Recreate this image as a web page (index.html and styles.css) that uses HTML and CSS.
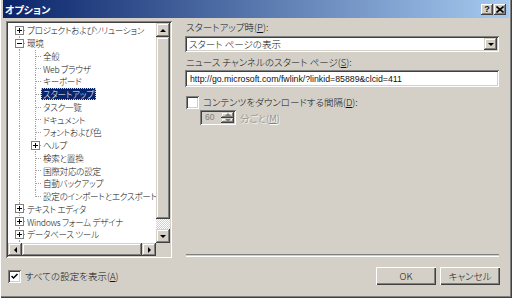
FILE: index.html
```html
<!DOCTYPE html>
<html lang="ja">
<head>
    <meta charset="UTF-8">
    <meta name="viewport" content="width=device-width, initial-scale=1.0">
    <title>オプション</title>
    <link rel="stylesheet" href="styles.css">
</head>
<body>

    <div class="window">
        <div class="titlebar">
            <span class="title">オプション</span>
            <div class="caption-btns">
                <span class="cbtn">?</span>
                <span class="cbtn">
                    <svg width="8" height="7" viewBox="0 0 8 7"><path d="M0.5 0.5L7.5 6.5M7.5 0.5L0.5 6.5" stroke="#000" stroke-width="1.6"/></svg>
                </span>
            </div>
        </div>

        <div class="main">
            <div class="tree">
                <div class="tree-list">
                    <div class="row"><span class="cell first"><span class="exp plus"></span></span><span class="label">プロジェクトおよびソリューション</span></div>
                    <div class="row"><span class="cell tee"><span class="exp minus"></span></span><span class="label">環境</span></div>
                    <div class="row"><span class="cell pipe"></span><span class="cell tee"></span><span class="label">全般</span></div>
                    <div class="row"><span class="cell pipe"></span><span class="cell tee"></span><span class="label">Web ブラウザ</span></div>
                    <div class="row"><span class="cell pipe"></span><span class="cell tee"></span><span class="label">キーボード</span></div>
                    <div class="row"><span class="cell pipe"></span><span class="cell tee"></span><span class="label selected">スタートアップ</span></div>
                    <div class="row"><span class="cell pipe"></span><span class="cell tee"></span><span class="label">タスク一覧</span></div>
                    <div class="row"><span class="cell pipe"></span><span class="cell tee"></span><span class="label">ドキュメント</span></div>
                    <div class="row"><span class="cell pipe"></span><span class="cell tee"></span><span class="label">フォントおよび色</span></div>
                    <div class="row"><span class="cell pipe"></span><span class="cell tee"><span class="exp plus"></span></span><span class="label">ヘルプ</span></div>
                    <div class="row"><span class="cell pipe"></span><span class="cell tee"></span><span class="label">検索と置換</span></div>
                    <div class="row"><span class="cell pipe"></span><span class="cell tee"></span><span class="label">国際対応の設定</span></div>
                    <div class="row"><span class="cell pipe"></span><span class="cell tee"></span><span class="label">自動バックアップ</span></div>
                    <div class="row"><span class="cell pipe"></span><span class="cell elbow"></span><span class="label">設定のインポートとエクスポート</span></div>
                    <div class="row"><span class="cell tee"><span class="exp plus"></span></span><span class="label">テキスト エディタ</span></div>
                    <div class="row"><span class="cell tee"><span class="exp plus"></span></span><span class="label">Windows フォーム デザイナ</span></div>
                    <div class="row"><span class="cell tee"><span class="exp plus"></span></span><span class="label">データベース ツール</span></div>
                    <div class="row"><span class="cell tee"><span class="exp plus"></span></span><span class="label">デバッグ</span></div>
                </div>
                <div class="vscroll">
                    <span class="sbtn"><span class="arrow up"></span></span>
                    <span class="thumb"></span>
                    <span class="track"></span>
                    <span class="sbtn"><span class="arrow down"></span></span>
                </div>
                <div class="hscroll">
                    <span class="sbtn"><span class="arrow left"></span></span>
                    <span class="thumb"></span>
                    <span class="sbtn"><span class="arrow right"></span></span>
                </div>
                <div class="corner"></div>
            </div>

            <div class="panel">
                <div class="field-label">スタートアップ時(<u>P</u>):</div>
                <div class="combo">
                    <span class="combo-value">スタート ページの表示</span>
                    <span class="sbtn"><span class="arrow down"></span></span>
                </div>
                <div class="field-label second">ニュース チャンネルのスタート ページ(<u>S</u>):</div>
                <div class="textbox">http://go.microsoft.com/fwlink/?linkid=85889&amp;clcid=411</div>
                <div class="check-row download">
                    <span class="checkbox"></span>
                    <span>コンテンツをダウンロードする間隔(<u>D</u>):</span>
                </div>
                <div class="spin-row">
                    <div class="spin">
                        <span class="spin-value">60</span>
                        <span class="spin-btns">
                            <span class="sbtn small"><span class="arrow up gray"></span></span>
                            <span class="sbtn small"><span class="arrow down gray"></span></span>
                        </span>
                    </div>
                    <span class="disabled">分ごと(<u>M</u>)</span>
                </div>
                <div class="separator"></div>
            </div>
        </div>

        <div class="footer">
            <div class="check-row">
                <span class="checkbox">
                    <svg width="7" height="7" viewBox="0 0 7 7"><path d="M0.5 3L2.5 5L6.5 1" stroke="#000" stroke-width="1.5" fill="none"/></svg>
                </span>
                <span>すべての設定を表示(<u>A</u>)</span>
            </div>
            <div class="buttons">
                <span class="btn">OK</span>
                <span class="btn">キャンセル</span>
            </div>
        </div>
    </div>

</body>
</html>
```

FILE: styles.css
```css
body {
    margin: 0;
    background: #d4d0c8;
    font-family: "Noto Sans CJK JP", sans-serif;
    font-size: 9px;
    font-weight: 300;
    font-feature-settings: "palt";
    color: #111;
}
.window {
    width: 512px;
    height: 298px;
    box-sizing: border-box;
    padding: 0 3px 3px 3px;
    background: #d4d0c8;
    box-shadow: inset 1px 0 #fff, inset -1px -1px #404040, inset -2px -2px #808080;
    display: flex;
    flex-direction: column;
}

/* title bar */
.titlebar {
    height: 18px;
    display: flex;
    align-items: center;
    justify-content: space-between;
    background: linear-gradient(to right, #0a246a, #a6caf0);
}
.title {
    color: #fff;
    font-weight: bold;
    font-size: 10px;
    padding-left: 2px;
}
.caption-btns {
    display: flex;
    gap: 1px;
    margin-right: 3px;
}
.cbtn {
    width: 12px;
    height: 11px;
    display: flex;
    align-items: center;
    justify-content: center;
    background: #d4d0c8;
    box-shadow: inset -1px -1px #404040, inset 1px 1px #fff, inset -2px -2px #808080;
    font-family: "Liberation Sans", sans-serif;
    font-weight: bold;
    font-size: 9px;
    line-height: 1;
}

/* shared 3d bits */
.sbtn {
    width: 14px;
    height: 14px;
    flex: none;
    display: flex;
    align-items: center;
    justify-content: center;
    background: #d4d0c8;
    box-shadow: inset -1px -1px #404040, inset 1px 1px #d4d0c8, inset -2px -2px #808080, inset 2px 2px #fff;
}
.arrow {
    width: 0;
    height: 0;
    border: 3px solid transparent;
}
.arrow.up { border-top: 0; border-bottom: 3px solid #000; }
.arrow.down { border-bottom: 0; border-top: 3px solid #000; }
.arrow.left { border-left: 0; border-right: 3px solid #000; }
.arrow.right { border-right: 0; border-left: 3px solid #000; }
.arrow.up.gray { border-bottom-color: #808080; }
.arrow.down.gray { border-top-color: #808080; }

/* tree */
.main {
    display: flex;
    gap: 13px;
    height: 237px;
    margin-top: 3px;
    padding: 0 9px 0 3px;
}
.tree {
    width: 166px;
    box-sizing: border-box;
    padding: 2px;
    display: grid;
    grid-template-columns: 1fr 14px;
    grid-template-rows: 1fr 13px;
    box-shadow: inset 1px 1px #808080, inset -1px -1px #fff, inset 2px 2px #404040, inset -2px -2px #d4d0c8;
}
.tree-list {
    background: #fff;
    overflow: hidden;
    padding: 1px 0 0 4px;
    font-size: 8.6px;
    letter-spacing: -0.3px;
}
.row {
    height: 12.75px;
    display: flex;
    align-items: center;
    white-space: nowrap;
}
.cell {
    width: 16px;
    height: 100%;
    flex: none;
    display: flex;
    align-items: center;
    padding-left: 3px;
    box-sizing: border-box;
}
.pipe {
    background: repeating-linear-gradient(#a0a0a0 0 1px, transparent 1px 2px) 7px 0 / 1px 100% no-repeat;
}
.tee {
    background:
        repeating-linear-gradient(90deg, #a0a0a0 0 1px, transparent 1px 2px) 8px 6px / 6px 1px no-repeat,
        repeating-linear-gradient(#a0a0a0 0 1px, transparent 1px 2px) 7px 0 / 1px 100% no-repeat;
}
.elbow {
    background:
        repeating-linear-gradient(90deg, #a0a0a0 0 1px, transparent 1px 2px) 8px 6px / 6px 1px no-repeat,
        repeating-linear-gradient(#a0a0a0 0 1px, transparent 1px 2px) 7px 0 / 1px 7px no-repeat;
}
.first {
    background:
        repeating-linear-gradient(90deg, #a0a0a0 0 1px, transparent 1px 2px) 8px 6px / 6px 1px no-repeat,
        repeating-linear-gradient(#a0a0a0 0 1px, transparent 1px 2px) 7px 6px / 1px 100% no-repeat;
}
.exp {
    width: 9px;
    height: 9px;
    box-sizing: border-box;
    border: 1px solid #808080;
    background-color: #fff;
}
.exp.minus {
    background: linear-gradient(#000, #000) center / 5px 1px no-repeat, #fff;
}
.exp.plus {
    background:
        linear-gradient(#000, #000) center / 5px 1px no-repeat,
        linear-gradient(#000, #000) center / 1px 5px no-repeat,
        #fff;
}
.label {
    margin-left: -3px;
    padding: 0 2px;
    line-height: 12px;
}
.label.selected {
    background: #0a246a;
    color: #fff;
    outline: 1px dotted #d4d0c8;
    outline-offset: -1px;
}
.vscroll {
    display: flex;
    flex-direction: column;
}
.vscroll .thumb {
    flex: 1;
    background: #d4d0c8;
    box-shadow: inset -1px -1px #404040, inset 1px 1px #d4d0c8, inset -2px -2px #808080, inset 2px 2px #fff;
}
.track {
    height: 10px;
    background: repeating-conic-gradient(#fff 0 25%, #d4d0c8 0 50%) 0 0 / 2px 2px;
}
.hscroll {
    display: flex;
}
.hscroll .sbtn {
    height: 13px;
}
.hscroll .thumb {
    flex: 1;
    background: #d4d0c8;
    box-shadow: inset -1px -1px #404040, inset 1px 1px #d4d0c8, inset -2px -2px #808080, inset 2px 2px #fff;
}
.corner {
    background: #d4d0c8;
}

/* right panel */
.panel {
    flex: 1;
    display: flex;
    flex-direction: column;
    padding-left: 1px;
}
.field-label {
    line-height: 12px;
    font-size: 9.5px;
}
.field-label.second {
    margin-top: 4px;
}
.combo, .textbox {
    height: 16px;
    box-sizing: border-box;
    margin-left: -1px;
    padding: 2px;
    background: #fff;
    display: flex;
    align-items: center;
    box-shadow: inset 1px 1px #808080, inset -1px -1px #fff, inset 2px 2px #404040, inset -2px -2px #d4d0c8;
}
.combo {
    margin-top: 3px;
    margin-right: 1px;
}
.combo-value {
    flex: 1;
    padding-left: 2px;
    font-size: 9.5px;
}
.combo .sbtn {
    height: 12px;
    width: 13px;
}
.textbox {
    height: 17px;
    margin-top: 2px;
    margin-right: 1px;
    padding-left: 5px;
    font-family: "Liberation Sans", sans-serif;
    font-weight: normal;
    font-size: 8.75px;
}
.check-row {
    display: flex;
    align-items: center;
    gap: 4px;
    font-size: 9.5px;
}
.check-row.download {
    margin-top: 8px;
}
.checkbox {
    width: 13px;
    height: 13px;
    box-sizing: border-box;
    display: flex;
    align-items: center;
    justify-content: center;
    background: #fff;
    box-shadow: inset 1px 1px #808080, inset -1px -1px #fff, inset 2px 2px #404040, inset -2px -2px #d4d0c8;
}
.spin-row {
    display: flex;
    align-items: center;
    gap: 4px;
    margin: 1px 0 0 14px;
}
.spin {
    width: 36px;
    height: 15px;
    box-sizing: border-box;
    padding: 2px;
    display: flex;
    box-shadow: inset 1px 1px #808080, inset -1px -1px #fff, inset 2px 2px #404040, inset -2px -2px #d4d0c8;
}
.spin-value {
    flex: 1;
    padding-left: 3px;
    line-height: 11px;
    font-family: "Liberation Sans", sans-serif;
    font-weight: normal;
    font-size: 8.5px;
    color: #808080;
}
.spin-btns {
    display: flex;
    flex-direction: column;
}
.sbtn.small {
    width: 13px;
    height: 5.5px;
}
.disabled {
    color: #808080;
    text-shadow: 1px 1px #fff;
    font-size: 9.5px;
}
.separator {
    height: 1px;
    border-top: 1px solid #808080;
    border-bottom: 1px solid #fff;
    margin: auto 1px 1px 0;
}

/* footer */
.footer {
    display: flex;
    align-items: center;
    justify-content: space-between;
    padding: 9px 9px 0 5px;
}
.buttons {
    display: flex;
    gap: 4px;
}
.btn {
    width: 60px;
    height: 18px;
    display: flex;
    align-items: center;
    justify-content: center;
    background: #d4d0c8;
    box-shadow: inset 1px 1px #fff, inset -1px -1px #404040, inset -2px -2px #808080;
    font-size: 9.5px;
}
```
